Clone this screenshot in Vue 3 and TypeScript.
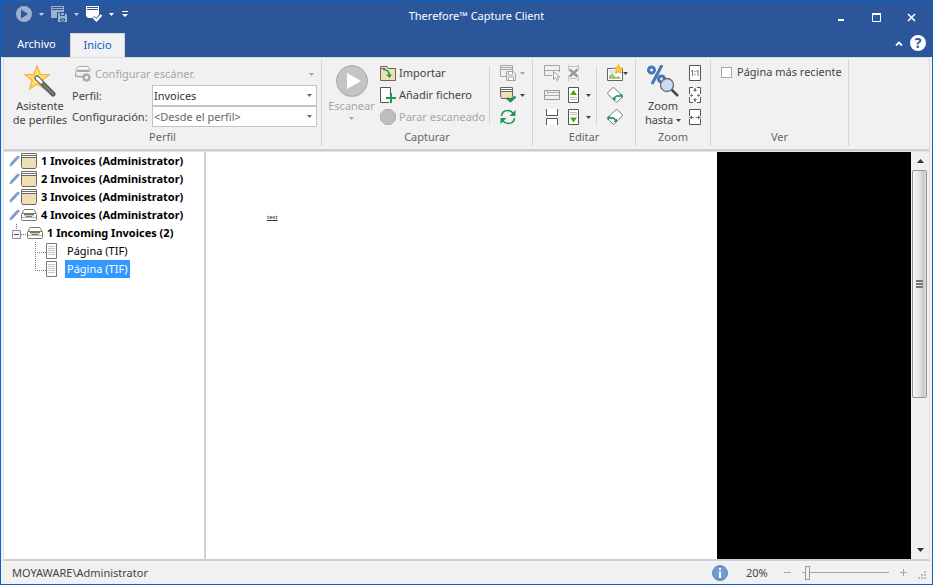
<script setup lang="ts">
import { ref } from 'vue'

interface Batch {
  label: string
  icon: string
}

const batches: Batch[] = [
  { label: '1 Invoices (Administrator)', icon: 'stack' },
  { label: '2 Invoices (Administrator)', icon: 'stack' },
  { label: '3 Invoices (Administrator)', icon: 'stack' },
  { label: '4 Invoices (Administrator)', icon: 'scanner' },
]
const pages: string[] = ['Página (TIF)', 'Página (TIF)']

const profile = ref('Invoices')
const setup = ref('<Desde el perfil>')
const latestPage = ref(false)
const selectedPage = ref(1)
const expanded = ref(true)
const zoom = ref(20)
</script>

<template>
  <svg class="sprite" aria-hidden="true">
    <symbol id="caret" viewBox="0 0 5 3"><path d="M0 0h5L2.5 3z" fill="currentColor" /></symbol>
    <symbol id="play" viewBox="0 0 32 32">
      <circle cx="16" cy="16" r="15.5" fill="#c4c4c4" stroke="#a9a9a9" />
      <path d="M11 8v16l14-8z" fill="#fff" />
    </symbol>
    <symbol id="stack" viewBox="0 0 16 16">
      <path d="M.5 7V.5h15V7M.5 2.500h15" fill="#fff" stroke="#6e6e6e" />
      <path d="M.5 4.500h15v9l-1 2h-13l-1-2z" fill="#f0deb4" stroke="#6e6461" />
    </symbol>
    <symbol id="scanner" viewBox="0 0 16 16">
      <path d="M2.500 3.500q.3-1 1-1h9q.7 0 1 1l1.500 3h-14z" fill="#fff" stroke="#777" />
      <path d="M.5 7.500q0-1 1-1h13q1 0 1 1v5q0 1-1 1h-13q-1 0-1-1z" fill="#fff" stroke="#777" />
      <path d="M1 10.500h14" stroke="#b5b5b5" />
      <path d="M3 7h10v2.500H3z" fill="#c5d88a" /><path d="M3 7.500h10M5 9.500h6" stroke="#777" />
    </symbol>
    <symbol id="pencil" viewBox="0 0 11 12">
      <path d="M1 11l1-3 6-6.500q1.500-1 2.500.5L4 9z" fill="#7f9fce" stroke="#7190bd" stroke-width=".8" />
      <path d="M.5 11.500l1.200-3L3.800 10z" fill="#9b9b9b" />
    </symbol>
    <symbol id="page" viewBox="0 0 11 16">
      <path d="M.5.5h10v15H.5z" fill="#fff" stroke="#777" />
      <path d="M2 3.500h7M2 5.500h7M2 7.500h7M2 9.500h7M2 11.500h7" stroke="#c5c5c5" />
    </symbol>
    <symbol id="save-batch" viewBox="0 0 16 16">
      <path d="M6 11.500H.5V.5h12V6M1 2.500h11M1 4.500h11" fill="none" stroke="#a5a5a5" />
      <path d="M6.500 6.500h7l2 2v7h-9z" fill="#eee" stroke="#a5a5a5" />
      <path d="M8.500 7v3h4V7M8.500 15v-3h5v3" fill="#fff" stroke="#aaa" />
    </symbol>
    <symbol id="check-batch" viewBox="0 0 16 16">
      <path d="M.5 6V.5h12V6M.5 2.500h12" fill="#fff" stroke="#666" />
      <path d="M.5 4.500h12v5l-1 2H1.500l-1-2z" fill="#f0deb4" stroke="#6e6461" />
      <path d="M7 11l3.500 3L15.500 9.500" fill="none" stroke="#219653" stroke-width="2.500" />
    </symbol>
    <symbol id="sheet-up" viewBox="0 0 11 16">
      <path d="M.5.5h10v15H.5z" fill="#fff" stroke="#555" />
      <path d="M2 8h7L5.500 3z" fill="#49a512" />
      <path d="M2 10.500h7M2 12.500h7" stroke="#bbb" />
    </symbol>
    <symbol id="sheet-down" viewBox="0 0 11 16">
      <path d="M.5.5h10v15H.5z" fill="#fff" stroke="#555" />
      <path d="M2 8.500h7l-3.500 5z" fill="#49a512" />
      <path d="M2 3.500h7M2 5.500h7" stroke="#bbb" />
    </symbol>
    <symbol id="rotate" viewBox="0 0 16 16">
      <path d="M5.500.8Q6.300.2 7 .8L15.300 8.500Q15.800 9.200 15.300 9.800L10.200 15Q9.500 15.500 8.800 15L.8 7.200Q.3 6.500.8 5.800z" fill="#fff" stroke="#777" />
      <path d="M7.500 11.500q1.500-4 6-2" fill="none" stroke="#219653" stroke-width="1.600" />
      <path d="M6 9.500v3.500h3.500zM12 7.500h3.500v4z" fill="#219653" />
    </symbol>
  </svg>

  <div class="window">
    <header class="titlebar">
      <nav class="quick" aria-label="Acceso rápido">
        <button class="q-icon" aria-label="Escanear">
          <svg viewBox="0 0 16 16"><circle cx="8" cy="8" r="8" fill="#9db1d0" /><path d="M5 3.500v9L12 8z" fill="#2b579a" /></svg>
        </button>
        <button class="q-caret dim" aria-label="Opciones de escaneo"><svg class="caret"><use href="#caret" /></svg></button>
        <button class="q-icon" aria-label="Guardar">
          <svg viewBox="0 0 16 16">
            <path d="M0 0h13v6H6v6H0z" fill="#9db1d0" /><path d="M1 1.500h11M1 3.500h11" stroke="#2b579a" />
            <path d="M7 7h7l2 2v7H7z" fill="#9db1d0" /><path d="M9.500 7v2.500h4V7M9.500 13h4v2h-4z" fill="none" stroke="#2b579a" />
          </svg>
        </button>
        <button class="q-caret dim" aria-label="Opciones de guardado"><svg class="caret"><use href="#caret" /></svg></button>
        <button class="q-icon" aria-label="Validar">
          <svg viewBox="0 0 16 16">
            <path d="M0 0h13v9l-2 3H2l-2-2z" fill="#fff" /><path d="M1 1.500h11M1 3.500h11" stroke="#2b579a" />
            <path d="M7 11.500l3.500 3L15.500 9" fill="none" stroke="#2b579a" stroke-width="4" />
            <path d="M7.500 11.500l3 3L15.500 9" fill="none" stroke="#fff" stroke-width="2.200" />
          </svg>
        </button>
        <button class="q-caret" aria-label="Opciones de validación"><svg class="caret"><use href="#caret" /></svg></button>
        <button class="q-more" aria-label="Personalizar">
          <svg width="6" height="6" viewBox="0 0 6 6"><path d="M0 0h6v1H0zM0 3h6L3 6z" fill="#fff" /></svg>
        </button>
      </nav>
      <h1 class="title">Therefore™ Capture Client</h1>
      <div class="controls">
        <button aria-label="Minimizar"><svg viewBox="0 0 9 9"><path d="M1 6h6v2H1z" fill="#fff" /></svg></button>
        <button aria-label="Maximizar"><svg viewBox="0 0 9 9"><path d="M.5 1h8v7.500h-8zM0 .5h9v1H0z" fill="none" stroke="#fff" /></svg></button>
        <button aria-label="Cerrar"><svg viewBox="0 0 9 9"><path d="M1 1l7 7M8 1L1 8" stroke="#fff" stroke-width="1.600" /></svg></button>
      </div>
    </header>

    <div class="tabs">
      <button class="tab file">Archivo</button>
      <button class="tab active">Inicio</button>
      <div class="tab-tools">
        <button aria-label="Contraer la cinta"><svg width="8" height="5" viewBox="0 0 8 5"><path d="M1 4.500l3-3 3 3" fill="none" stroke="#fff" stroke-width="1.800" /></svg></button>
        <button class="help" aria-label="Ayuda">?</button>
      </div>
    </div>

    <section class="ribbon">
      <div class="group g-profile">
        <div class="group-body">
          <button class="big wizard">
            <svg class="i32" viewBox="0 0 32 32">
              <path d="M13 .8l3.300 8.500 8.900.4-7 5.600 2.500 8.700-7.400-5-7.700 5 2.500-8.800L1 9.700l8.900-.4z" fill="#ffdb70" stroke="#f2b73c" stroke-width="1.200" />
              <path d="M13 13l16 16" stroke="#555" stroke-width="5" stroke-linecap="round" />
              <path d="M13 13l16 16" stroke="#777" stroke-width="2.500" stroke-linecap="round" />
              <path d="M13 13l4 4" stroke="#fff" stroke-width="3" stroke-linecap="round" />
            </svg>
            <span>Asistente<br />de perfiles</span>
          </button>
          <div class="fields">
            <button class="line muted">
              <svg class="i16" viewBox="0 0 16 16">
                <path d="M2.500 1.500q.3-1 1-1h9q.7 0 1 1l2 3q0 1-1 1h-13q-1 0-1-1z" fill="#f8f8f8" stroke="#a8a8a8" />
                <path d="M8 10.500H1.500q-1 0-1-1v-3M2 4.500h12" fill="none" stroke="#a8a8a8" stroke-width="1.500" />
                <circle cx="11.500" cy="11.500" r="2.800" fill="none" stroke="#a8a8a8" stroke-width="2" />
                <path d="M11.500 7v2m0 5v2M7 11.500h2m5 0h2M8.300 8.300l1.400 1.400m3.600 3.600l1.400 1.400m0-6.400l-1.400 1.400m-3.600 3.600l-1.400 1.400" stroke="#a8a8a8" stroke-width="1.500" />
              </svg>
              <span class="grow">Configurar escáner.</span>
              <svg class="caret"><use href="#caret" /></svg>
            </button>
            <div class="field">
              <label for="profile">Perfil:</label>
              <div class="select">
                <select id="profile" v-model="profile"><option>Invoices</option></select>
                <svg class="caret"><use href="#caret" /></svg>
              </div>
            </div>
            <div class="field">
              <label for="setup">Configuración:</label>
              <div class="select soft">
                <select id="setup" v-model="setup"><option>&lt;Desde el perfil&gt;</option></select>
                <svg class="caret"><use href="#caret" /></svg>
              </div>
            </div>
          </div>
        </div>
        <h2>Perfil</h2>
      </div>

      <div class="group g-capture">
        <div class="group-body">
          <button class="big muted">
            <svg class="i32"><use href="#play" /></svg>
            <span>Escanear</span>
            <svg class="caret"><use href="#caret" /></svg>
          </button>
          <div class="stack commands">
            <button class="line">
              <svg class="i16" viewBox="0 0 16 16">
                <path d="M.5 15.500V1.500H7l1 2h7.500v12z" fill="#f0deb4" stroke="#6e6461" />
                <path d="M1 3.500h4" stroke="#6e6461" />
                <path d="M3 4.500q6 0 6.500 6" fill="none" stroke="#219653" stroke-width="1.500" /><path d="M6 9.500h6L9.500 13z" fill="#219653" />
              </svg>Importar
            </button>
            <button class="line">
              <svg class="i16" viewBox="0 0 16 16">
                <path d="M.5.5h10v15H.5z" fill="#fff" stroke="#555" />
                <path d="M11 6v10M6 11h10" stroke="#f1f1f1" stroke-width="4" /><path d="M11 6v10M6 11h10" stroke="#219653" stroke-width="2" />
              </svg>Añadir fichero
            </button>
            <button class="line muted">
              <svg class="i16" viewBox="0 0 16 16"><path d="M5 .5h6L15.500 5v6L11 15.500H5L.5 11V5z" fill="#bdbdbd" stroke="#b0b0b0" /></svg>Parar escaneado
            </button>
          </div>
          <div class="rule"></div>
          <div class="stack">
            <button class="tool muted" aria-label="Guardar lote"><svg class="i16"><use href="#save-batch" /></svg><svg class="caret"><use href="#caret" /></svg></button>
            <button class="tool" aria-label="Validar lote"><svg class="i16"><use href="#check-batch" /></svg><svg class="caret"><use href="#caret" /></svg></button>
            <button class="tool" aria-label="Actualizar">
              <svg class="i16" viewBox="0 0 16 16">
                <path d="M1.500 7Q2 1.500 8 1.500q3 0 5.500 3M14.500 9Q14 14.500 8 14.500q-3 0-5.500-3" fill="none" stroke="#219653" stroke-width="1.600" />
                <path d="M15.500 1v6h-6zM.5 15V9h6z" fill="#219653" />
              </svg>
            </button>
          </div>
        </div>
        <h2>Capturar</h2>
      </div>

      <div class="group g-edit">
        <div class="group-body">
          <div class="stack">
            <button class="tool" aria-label="Seleccionar">
              <svg class="i16" viewBox="0 0 16 16"><path d="M8 10.500H.5V.5h15V7M1 5.500h14" fill="none" stroke="#a5a5a5" /><path d="M9.500 6.500v8l2-2 1.500 3 1.500-1-1.500-2.500h2.500z" fill="#fff" stroke="#a0a0a0" /></svg>
            </button>
            <button class="tool" aria-label="Separar">
              <svg class="i16" viewBox="0 0 16 16"><path d="M.5 3.500h15v9H.5z" fill="#f1f1f1" stroke="#999" /><path d="M3.500 4v3M1 8.500h14M3 5.500h12" fill="none" stroke="#aaa" /></svg>
            </button>
            <button class="tool" aria-label="Unir">
              <svg class="i16" viewBox="0 0 16 16"><path d="M2.500 0v6.500h11V0M2.500 16V9.500h11V16" fill="#fff" stroke="#555" /></svg>
            </button>
          </div>
          <div class="stack">
            <button class="tool" aria-label="Eliminar">
              <svg class="i11" viewBox="0 0 11 16"><path d="M.5 0v5M.5 11v5M10.500 0v5M10.500 11v5M1 1.500h9M2 13.500h7" stroke="#c0c0c0" /><path d="M1.500 4.500l8 7M9.500 4.500l-8 7" stroke="#999" stroke-width="2.500" /></svg>
            </button>
            <button class="tool" aria-label="Subir"><svg class="i11"><use href="#sheet-up" /></svg><svg class="caret"><use href="#caret" /></svg></button>
            <button class="tool" aria-label="Bajar"><svg class="i11"><use href="#sheet-down" /></svg><svg class="caret"><use href="#caret" /></svg></button>
          </div>
          <div class="rule"></div>
          <div class="stack">
            <button class="tool tight" aria-label="Mejorar imagen">
              <svg class="i16 open" viewBox="0 0 16 16">
                <path d="M.5 3.500h15v12H.5z" fill="#fff" stroke="#666" /><path d="M2 5h12v3H2z" fill="#d7e8f5" />
                <path d="M2 14v-3l3-3 4 4 3-1 2 3z" fill="#a9c47f" />
                <path d="M11.500-.5l1.300 3.200 3.200.2-2.500 2.200.8 3.400-2.800-1.800-2.800 1.800.8-3.400L7 2.900l3.200-.2z" fill="#ffc83d" stroke="#efae28" />
              </svg><svg class="caret"><use href="#caret" /></svg>
            </button>
            <button class="tool" aria-label="Girar a la derecha"><svg class="i16"><use href="#rotate" /></svg></button>
            <button class="tool" aria-label="Girar a la izquierda"><svg class="i16 flip"><use href="#rotate" /></svg></button>
          </div>
        </div>
        <h2>Editar</h2>
      </div>

      <div class="group g-zoom">
        <div class="group-body">
          <button class="big">
            <svg class="i32" viewBox="0 0 32 32">
              <circle cx="4.500" cy="5" r="3" fill="none" stroke="#4775b8" stroke-width="3" /><circle cx="14.500" cy="14" r="3" fill="none" stroke="#4775b8" stroke-width="3" />
              <path d="M15 0L5 19" stroke="#4775b8" stroke-width="3" />
              <path d="M24 24l7 7" stroke="#444" stroke-width="2.500" /><circle cx="20" cy="20" r="6.500" fill="#c6d9f0" fill-opacity=".9" stroke="#666" stroke-width="1.300" />
            </svg>
            <span>Zoom<br />hasta <svg class="caret"><use href="#caret" /></svg></span>
          </button>
          <div class="stack">
            <button class="tool" aria-label="Tamaño real">
              <svg class="i12" viewBox="0 0 12 16"><path d="M.5.5h11v15H.5z" fill="#fff" stroke="#555" /><path d="M3.500 5v6M2 6h1.500M9 5v6M7.500 6H9M6 6v1.200M6 9v1.200" fill="none" stroke="#777" /></svg>
            </button>
            <button class="tool" aria-label="Página completa">
              <svg class="i12" viewBox="0 0 12 16"><path d="M.5 7V.5H4M8 .5h3.500V7M.5 10v5.500H4M8 15.500h3.500V10" fill="none" stroke="#555" /><path d="M1 1h10v14H1z" fill="#fff" /><path d="M6 1v4M6 11v4M1 8.500h3M8 8.500h3" stroke="#777" /><path d="M4 4l2-3 2 3zM4 12l2 3 2-3zM3 6.500v4l-2-2zM9 6.500v4l2-2z" fill="#777" /></svg>
            </button>
            <button class="tool" aria-label="Ancho de página">
              <svg class="i12" viewBox="0 0 12 16"><path d="M.5 7V.5h11V7M.5 10v5.500h11V10" fill="none" stroke="#555" /><path d="M1 1h10v14H1z" fill="#fff" /><path d="M0 8.500h5M7 8.500h5" stroke="#777" /><path d="M3 6.500v4L.5 8.500zM9 6.500v4l2.500-2z" fill="#666" /></svg>
            </button>
          </div>
        </div>
        <h2>Zoom</h2>
      </div>

      <div class="group g-view">
        <div class="group-body">
          <label class="check"><input v-model="latestPage" type="checkbox" />Página más reciente</label>
        </div>
        <h2>Ver</h2>
      </div>
    </section>

    <main class="work">
      <ul class="tree">
        <li v-for="batch in batches" :key="batch.label">
          <button class="node batch">
            <svg class="pencil"><use href="#pencil" /></svg>
            <svg class="i16"><use :href="'#' + batch.icon" /></svg>
            <span>{{ batch.label }}</span>
          </button>
        </li>
        <li>
          <button class="node incoming" :aria-expanded="expanded" @click="expanded = !expanded">
            <svg class="expander" viewBox="0 0 15 18">
              <path d="M4.500 0v5M9 10.500h6" stroke="#777" stroke-dasharray="1 1" />
              <path d="M.5 6.500h8v8h-8z" fill="#f6f6f6" stroke="#919191" /><path d="M2 10.500h5" stroke="#3a54b4" />
            </svg>
            <svg class="i16"><use href="#scanner" /></svg>
            <span>1 Incoming Invoices (2)</span>
          </button>
          <ul v-if="expanded">
            <li v-for="(page, i) in pages" :key="i">
              <button class="node leaf" :class="{ selected: selectedPage === i }" @click="selectedPage = i">
                <svg class="branch" viewBox="0 0 11 18">
                  <path d="M.5 0v10M0 10.500h11" stroke="#777" stroke-dasharray="1 1" />
                  <path v-if="i < pages.length - 1" d="M.5 10v8" stroke="#777" stroke-dasharray="1 1" />
                </svg>
                <svg class="i11"><use href="#page" /></svg>
                <span>{{ page }}</span>
              </button>
            </li>
          </ul>
        </li>
      </ul>
      <div class="viewer">
        <div class="paper"><span>test</span></div>
        <div class="void"></div>
        <div class="scroll">
          <button aria-label="Desplazar arriba"><svg width="7" height="4" viewBox="0 0 7 4"><path d="M0 4h7L3.500 0z" fill="#333" /></svg></button>
          <div class="track"><div class="thumb"><i></i><i></i><i></i></div></div>
          <button aria-label="Desplazar abajo"><svg width="7" height="4" viewBox="0 0 7 4"><path d="M0 0h7L3.500 4z" fill="#333" /></svg></button>
        </div>
      </div>
    </main>

    <footer class="status">
      <span class="grow">MOYAWARE\Administrator</span>
      <button class="info" aria-label="Información">
        <svg class="i16" viewBox="0 0 16 16"><circle cx="8" cy="8" r="7.500" fill="#6f9ad3" stroke="#5b86c2" /><path d="M7 3h2v2H7zM7 6.500h2V13H7z" fill="#fff" /></svg>
      </button>
      <output class="percent" for="zoom">{{ zoom }}%</output>
      <button aria-label="Reducir"><svg width="7" height="7" viewBox="0 0 7 7"><path d="M0 3.500h7" stroke="#a5a5a5" /></svg></button>
      <input id="zoom" v-model="zoom" class="slider" type="range" min="16" max="120" aria-label="Zoom" />
      <button aria-label="Ampliar"><svg width="7" height="7" viewBox="0 0 7 7"><path d="M0 3.500h7M3.500 0v7" stroke="#a5a5a5" /></svg></button>
      <svg class="grip" width="8" height="8" viewBox="0 0 8 8"><path d="M6 0h2v2H6zM3 3h2v2H3zM6 3h2v2H6zM0 6h2v2H0zM3 6h2v2H3zM6 6h2v2H6z" fill="#bdbdbd" /></svg>
    </footer>
  </div>
</template>

<style>
body {
  background: #fff;
}
</style>

<style scoped>
.window {
  box-sizing: border-box;
  height: calc(100vh - 1px);
  margin-right: 1px;
  display: flex;
  flex-direction: column;
  border: 1px solid #0a63c9;
  background: #f1f1f1;
  color: #444;
  font: 11px/14px "Noto Sans", "Open Sans", sans-serif;
}
.sprite {
  position: absolute;
  width: 0;
  height: 0;
}
button {
  display: flex;
  align-items: center;
  justify-content: center;
  padding: 0;
  border: 0;
  background: none;
  color: inherit;
  font: inherit;
}
svg {
  flex: none;
}
h1,
h2 {
  margin: 0;
  font: inherit;
}
ul {
  margin: 0;
  padding: 0;
  list-style: none;
}
.grow {
  flex: 1;
  text-align: left;
}
.caret {
  width: 5px;
  height: 3px;
}
.i32 {
  width: 32px;
  height: 32px;
}
.i16 {
  width: 16px;
  height: 16px;
}
.i12 {
  width: 12px;
  height: 16px;
}
.i11 {
  width: 11px;
  height: 16px;
}
.open {
  overflow: visible;
}
.flip {
  transform: scaleX(-1);
}

.titlebar {
  display: flex;
  align-items: flex-start;
  height: 32px;
  background: #2b579a;
  color: #fff;
}
.quick {
  display: flex;
  align-items: center;
  height: 26px;
  padding-left: 15px;
}
.q-icon svg {
  width: 16px;
  height: 16px;
}
.q-caret {
  width: 19px;
}
.dim {
  color: #c3cfe1;
}
.q-more {
  width: 8px;
}
.title {
  flex: 1;
  padding-top: 8px;
  text-align: center;
}
.controls {
  display: flex;
  padding: 3px 3px 0 0;
}
.controls button {
  width: 35px;
  height: 26px;
}
.controls svg {
  width: 9px;
  height: 9px;
}

.tabs {
  display: flex;
  align-items: stretch;
  height: 24px;
  padding-left: 2px;
  background: #2b579a;
}
.tab {
  width: 55px;
  padding-bottom: 2px;
  color: #fff;
}
.tab.file {
  width: 67px;
}
.tab.active {
  border: 1px solid #d4d4d4;
  border-bottom: 0;
  background: #f1f1f1;
  color: #0a5fc4;
}
.tab-tools {
  display: flex;
  align-items: flex-start;
  gap: 7px;
  margin-left: auto;
  padding: 2px 6px 0 0;
}
.tab-tools button {
  height: 16px;
}
.tab-tools .help {
  width: 16px;
  border-radius: 50%;
  background: #fff;
  color: #2b579a;
  font-size: 14px;
  font-weight: 700;
}

.ribbon {
  display: flex;
  margin: 0 2px;
  padding: 2px 0 3px;
  border: 1px solid #dcdcdc;
  border-bottom: 2px solid #cfcfcf;
}
.group {
  box-sizing: border-box;
  flex: none;
  padding-top: 2px;
  border-right: 1px solid #d4d4d4;
}
.g-profile {
  width: 318px;
}
.g-capture {
  width: 211px;
}
.g-edit {
  width: 103px;
}
.g-zoom {
  width: 75px;
}
.g-view {
  width: 138px;
}
.group-body {
  display: flex;
  align-items: flex-start;
  height: 68px;
}
.group h2 {
  padding-bottom: 2px;
  text-align: center;
  color: #666;
}
.muted {
  color: #a6a6a6;
}
.big {
  flex-direction: column;
  padding-top: 3px;
}
.big > span {
  margin-top: 2px;
}
.big > .caret {
  margin-top: 4px;
}
.big span .caret {
  vertical-align: 2px;
}
.line {
  gap: 4px;
  height: 22px;
  justify-content: flex-start;
}
.wizard {
  width: 58px;
  margin: 0 3px 0 7px;
}
.fields {
  flex: 1;
  padding: 1px 4px 0 0;
}
.fields .line {
  width: 100%;
  box-sizing: border-box;
  padding: 0 3px;
}
.field {
  display: flex;
  align-items: center;
}
.field label {
  width: 80px;
}
.select {
  flex: 1;
  display: grid;
  align-items: center;
}
.select > * {
  grid-area: 1 / 1;
}
.select .caret {
  justify-self: end;
  margin-right: 5px;
  color: #666;
  pointer-events: none;
}
.select select {
  appearance: none;
  box-sizing: border-box;
  width: 100%;
  height: 21px;
  padding: 0 1px;
  border: 1px solid #c3c3c3;
  border-radius: 0;
  background: #fff;
  color: #333;
  font: inherit;
}
.select.soft select {
  color: #666;
}

.stack {
  display: flex;
  flex-direction: column;
}
.commands {
  margin-left: 6px;
  width: 109px;
}
.commands .line {
  gap: 3px;
  white-space: nowrap;
}
.g-capture .big {
  width: 45px;
  margin-left: 7px;
}
.rule {
  width: 1px;
  height: 58px;
  margin-top: 4px;
  background: #d4d4d4;
}
.tool {
  gap: 4px;
  height: 22px;
  justify-content: flex-start;
}
.rule + .stack {
  margin-left: 10px;
}
.tool.tight {
  gap: 0;
}
.g-edit .group-body {
  padding-left: 11px;
}
.g-edit .stack + .stack {
  width: 28px;
  margin-left: 8px;
}
.g-edit .stack + .stack .tool {
  gap: 7px;
}
.g-zoom .big {
  width: 38px;
  margin: 0 7px 0 8px;
  white-space: nowrap;
}
.check {
  display: flex;
  align-items: center;
  gap: 5px;
  height: 20px;
  padding-left: 10px;
}
.check input {
  appearance: none;
  box-sizing: border-box;
  width: 11px;
  height: 11px;
  margin: 0;
  border: 1px solid #a6a6a6;
  background: #fff;
}
.check input:checked {
  background: #2b579a;
}

.work {
  flex: 1;
  min-height: 0;
  display: flex;
  margin: 0 2px;
  border: 1px solid #e2e2e2;
  border-bottom: 2px solid #cfcfcf;
}
.tree {
  box-sizing: border-box;
  flex: none;
  width: 202px;
  border-right: 2px solid #cfcfcf;
  background: #fff;
  color: #000;
}
.node {
  justify-content: flex-start;
  height: 18px;
  white-space: nowrap;
}
.batch {
  padding-left: 5px;
  font-weight: 700;
}
.pencil {
  width: 11px;
  height: 12px;
  margin-right: 1px;
}
.batch span {
  margin-left: 4px;
}
.incoming {
  padding-left: 8px;
  font-weight: 700;
}
.expander {
  width: 15px;
  height: 18px;
}
.incoming span {
  margin-left: 4px;
}
.leaf {
  padding-left: 31px;
}
.branch {
  width: 11px;
  height: 18px;
}
.leaf span {
  margin-left: 8px;
  padding: 0 2px;
  line-height: 18px;
}
.leaf.selected span {
  background: #3399ff;
  color: #fff;
}
.viewer {
  flex: 1;
  display: grid;
  grid-template-columns: 511fr 194fr 18px;
  min-width: 0;
  background: #fff;
}
.paper {
  padding: 58px 61px;
  color: #333;
  font-size: 6px;
}
.paper span {
  text-decoration: underline;
}
.void {
  background: #000;
}
.scroll {
  display: flex;
  flex-direction: column;
  background: #f0f0f0;
}
.scroll button {
  height: 18px;
}
.track {
  flex: 1;
  display: flex;
  flex-direction: column;
}
.thumb {
  display: flex;
  flex-direction: column;
  align-items: center;
  justify-content: center;
  gap: 1px;
  height: 61%;
  margin: 0 2px 0 1px;
  border: 1px solid #949494;
  border-radius: 2px;
  background: linear-gradient(90deg, #f6f6f6, #e4e4e6 50%, #c9cacf 80%, #dcdcde);
}
.thumb i {
  width: 7px;
  height: 2px;
  background: #777;
}

.status {
  display: flex;
  align-items: center;
  height: 23px;
  padding: 0 6px 0 11px;
}
.percent {
  width: 38px;
  padding-left: 18px;
}
.slider {
  appearance: none;
  width: 87px;
  height: 15px;
  margin: 0 11px;
  background: linear-gradient(#a5a5a5, #a5a5a5) center / 100% 1px no-repeat;
}
.slider::-webkit-slider-thumb {
  appearance: none;
  box-sizing: border-box;
  width: 5px;
  height: 14px;
  border: 1px solid #999;
  background: #f1f1f1;
}
.grip {
  margin: 4px 0 0 11px;
}
</style>
